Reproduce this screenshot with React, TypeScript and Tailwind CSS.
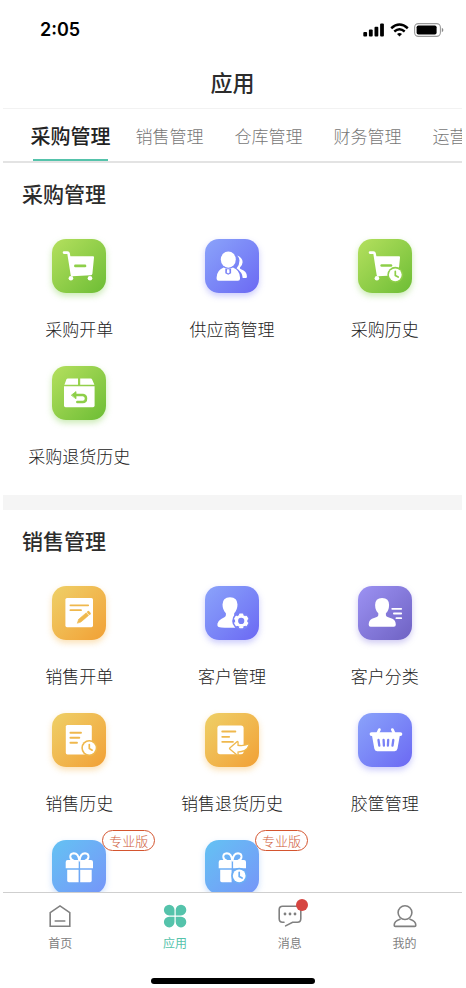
import type { ReactNode } from "react";
import clsx from "clsx";

type Tone = "green" | "blue" | "violet" | "amber" | "sky";

type AppItem = {
  label?: string;
  tone: Tone;
  icon: ReactNode;
  badge?: string;
};

const tones: Record<Tone, string> = {
  green:
    "from-[#b4e05e] to-[#6cbd34] shadow-[0_3px_6px_rgba(125,205,70,0.4)] text-[#8ecf49]",
  blue: "from-[#8ba3fa] to-[#6c68f3] shadow-[0_3px_6px_rgba(110,110,245,0.35)] text-[#7a82f6]",
  violet:
    "from-[#9c92f3] to-[#6f62c3] shadow-[0_3px_6px_rgba(120,105,220,0.35)] text-[#8578da]",
  amber:
    "from-[#eed067] to-[#f1a034] shadow-[0_3px_6px_rgba(245,180,70,0.4)] text-[#efb84d]",
  sky: "from-[#63c2f3] to-[#7595f8] shadow-[0_3px_6px_rgba(110,165,245,0.35)] text-[#6baef5]",
};

/* Glyphs are white, details cut into them use currentColor */
function Glyph({ children }: { children: ReactNode }) {
  return (
    <svg
      viewBox="0 0 54 54"
      className="size-full"
      fill="white"
      strokeLinecap="round"
      strokeLinejoin="round"
      aria-hidden="true"
    >
      {children}
    </svg>
  );
}

function Clock({ cx, cy }: { cx: number; cy: number }) {
  return (
    <g transform={`translate(${cx} ${cy})`}>
      <circle r="8" fill="currentColor" />
      <circle r="6.4" />
      <path d="M0 -3.4V0.6L2.9 2.2" fill="none" stroke="currentColor" strokeWidth="1.7" />
    </g>
  );
}

function CartShape() {
  return (
    <>
      <path d="M12 13.6H15.4Q16.4 13.6 16.6 14.6L20 36" fill="none" stroke="white" strokeWidth="2.6" />
      <path d="M17 17.3H41Q42.2 17.3 42 18.5L40.4 34.8Q40.2 36.1 39 36.2L19.8 37.3Z" />
      <circle cx="18.9" cy="39.3" r="2.3" />
    </>
  );
}

const CartIcon = (
  <Glyph>
    <CartShape />
    <circle cx="38" cy="39.3" r="2.3" />
    <path d="M23.4 26.9H33" stroke="currentColor" strokeWidth="2.7" />
  </Glyph>
);

const CartClockIcon = (
  <Glyph>
    <CartShape />
    <path d="M23.6 26.5H33" stroke="currentColor" strokeWidth="2.5" />
    <Clock cx={37.3} cy={35.8} />
  </Glyph>
);

const SupplierIcon = (
  <Glyph>
    <path d="M32.3 16.4Q37.8 18.8 37.6 23.2Q37.4 26.4 34.9 28.6Q34.4 29.5 36 30.3Q41.9 32.5 41.9 37.2V38Q41.9 39 40.9 39H37.7Q37.5 33.5 31.6 29.3Q34.5 26 34.5 21.6Q34.4 18.6 32.3 16.4Z" />
    <ellipse cx="23.3" cy="20.6" rx="7.5" ry="8.1" />
    <path d="M18.6 28.4Q23.3 31.2 28 28.4Q35 31.2 35 38.6V39.7Q35 41.7 33 41.7H13.6Q11.6 41.7 11.6 39.7V38.6Q11.6 31.2 18.6 28.4Z" />
    <path d="M20.3 29.7H26.1V34.2L23.2 35.8L20.3 34.2Z" fill="currentColor" />
    <path d="M22.1 30.2H24.3L24.6 33.4L23.2 34.5L21.8 33.4Z" />
  </Glyph>
);

const BoxReturnIcon = (
  <Glyph>
    <path d="M15.9 12.4H26V18.8H12.4L14.4 13.4Q14.8 12.4 15.9 12.4Z" />
    <path d="M28.2 12.4H38.6Q39.7 12.4 40.1 13.4L42.4 18.8H28.2Z" />
    <path d="M12 20.2H42.6V39.6Q42.6 41.2 41 41.2H13.6Q12 41.2 12 39.6Z" />
    <path d="M22.5 29H31Q34 29.4 34 32.4Q34 35.9 30.8 35.9H25.3" fill="none" stroke="currentColor" strokeWidth="2.5" />
    <path d="M19.6 29L24 25.6V32.4Z" fill="currentColor" stroke="currentColor" strokeWidth="0.8" />
  </Glyph>
);

const OrderPenIcon = (
  <Glyph>
    <rect x="13.4" y="12" width="27.6" height="29.2" rx="1.6" />
    <path d="M18.4 19.3H36.2M18.4 24.2H29" stroke="currentColor" strokeWidth="1.8" />
    <path d="M25.4 36.9L26.7 33.2L34.3 26.8L36.6 29.4L29 35.9Z" fill="currentColor" stroke="currentColor" strokeWidth="0.6" />
    <path d="M36.3 26.2L37.6 27.6" stroke="currentColor" strokeWidth="2.5" />
  </Glyph>
);

const CustomerGearIcon = (
  <Glyph>
    <path d="M25 11.2Q32.5 11.4 32.5 18.6Q32.4 24.2 29.2 27.2V29.3Q29.4 30.6 31 31.2L37 34V41.7Q19 42 13.6 40.9Q12 40.4 12.4 37.8Q13 34.8 16.2 33L19.4 31.2Q20.9 30.4 20.9 29V27.2Q17.6 24.2 17.5 18.6Q17.5 11.4 25 11.2Z" />
    <circle cx="36.2" cy="34.9" r="9" fill="currentColor" />
    <g transform="translate(36.2 34.9)">
      <circle r="6.2" />
      <path
        d="M-1.2 -6.3H1.2M4.9 -4.2L6.1 -2.1M6.1 2.1L4.9 4.2M1.2 6.3H-1.2M-4.9 4.2L-6.1 2.1M-6.1 -2.1L-4.9 -4.2"
        stroke="white"
        strokeWidth="2"
      />
      <circle r="3.1" fill="currentColor" />
    </g>
  </Glyph>
);

const CustomerListIcon = (
  <Glyph>
    <path d="M24.1 12Q31.1 12.2 31.1 19Q31 24.4 27.9 27.3V29.2Q28 30.4 29.6 31L34.4 32.8Q37.8 34.3 37.8 38.8Q37.8 40.7 35.8 40.7H12.6Q10.7 40.7 10.7 38.8Q10.7 34.3 14 32.8L18.7 31Q20.2 30.4 20.3 29.2V27.3Q17.2 24.4 17.1 19Q17.1 12.2 24.1 12Z" />
    <path d="M34.2 22.8H43.2M35.9 27.5H43.2M38.4 32.2H43.2" stroke="white" strokeWidth="1.8" />
  </Glyph>
);

const OrderClockIcon = (
  <Glyph>
    <rect x="13.8" y="12" width="26" height="29.4" rx="1.6" />
    <path d="M18.4 19.8H29M18.4 24.8H27.3M18.4 29.8H25" stroke="currentColor" strokeWidth="1.9" />
    <Clock cx={37.3} cy={35} />
  </Glyph>
);

const OrderReturnIcon = (
  <Glyph>
    <rect x="12.4" y="12.6" width="26.2" height="28.6" rx="2.6" />
    <path d="M17.2 18.5H30.4M17.2 23.8H24.2M17.2 28.8H28" stroke="currentColor" strokeWidth="1.8" />
    <path
      d="M25.2 35.4L32.4 29.2V32.9Q38.4 34 43.4 31.8Q41.4 38.2 32.4 38.4V41.6Z"
      stroke="currentColor"
      strokeWidth="2.6"
      paintOrder="stroke"
    />
  </Glyph>
);

const BasketIcon = (
  <Glyph>
    <path d="M19.6 20.5L21.4 16.6M36.2 20.5L34.4 16.6" stroke="white" strokeWidth="2.8" />
    <rect x="11.6" y="19.2" width="32.7" height="3.8" rx="1.9" />
    <path d="M13.8 21.5H42L39.5 35.6Q39.1 38.2 36.6 38.2H19.2Q16.7 38.2 16.3 35.6Z" />
    <path d="M20.5 27L21.3 32.6M25.6 27L25.9 32.6M30.2 27L29.9 32.6M35.3 27L34.5 32.6" stroke="currentColor" strokeWidth="2.3" />
  </Glyph>
);

function GiftTop() {
  return (
    <>
      <path
        d="M27.2 20.4Q26.4 13.3 21.8 13.3Q18.2 13.6 18.3 16.9Q18.6 19.8 21.4 20.4M27.6 20.4Q28.4 13.3 33 13.3Q36.6 13.6 36.5 16.9Q36.2 19.8 33.4 20.4"
        fill="none"
        stroke="white"
        strokeWidth="2"
      />
      <path d="M15.6 20H26.7V28.2H13.7V22Q13.7 20 15.6 20ZM28.1 20H39Q41 20 41 22V28.2H28.1Z" />
      <path d="M15.2 29.8H26.6V42.2H16.8Q15.2 42.2 15.2 40.6Z" />
    </>
  );
}

const GiftIcon = (
  <Glyph>
    <GiftTop />
    <path d="M28.2 29.8H39.7V40.6Q39.7 42.2 38.1 42.2H28.2Z" />
  </Glyph>
);

const GiftClockIcon = (
  <Glyph>
    <GiftTop />
    <Clock cx={34.2} cy={35.8} />
  </Glyph>
);

const tabs = ["采购管理", "销售管理", "仓库管理", "财务管理", "运营管理"];

const purchaseItems: AppItem[] = [
  { label: "采购开单", tone: "green", icon: CartIcon },
  { label: "供应商管理", tone: "blue", icon: SupplierIcon },
  { label: "采购历史", tone: "green", icon: CartClockIcon },
  { label: "采购退货历史", tone: "green", icon: BoxReturnIcon },
];

const salesItems: AppItem[] = [
  { label: "销售开单", tone: "amber", icon: OrderPenIcon },
  { label: "客户管理", tone: "blue", icon: CustomerGearIcon },
  { label: "客户分类", tone: "violet", icon: CustomerListIcon },
  { label: "销售历史", tone: "amber", icon: OrderClockIcon },
  { label: "销售退货历史", tone: "amber", icon: OrderReturnIcon },
  { label: "胶筐管理", tone: "blue", icon: BasketIcon },
  { tone: "sky", icon: GiftIcon, badge: "专业版" },
  { tone: "sky", icon: GiftClockIcon, badge: "专业版" },
];

function StatusBar() {
  return (
    <div className="flex h-[54px] shrink-0 items-center justify-between pl-[37px] pr-[18px] pt-[5px]">
      <span className="font-[Inter,sans-serif] text-lg font-semibold text-black">2:05</span>
      <div className="flex items-center gap-[5px]">
        <svg width="22" height="14" viewBox="0 0 22 14" aria-hidden="true">
          <rect x="0.3" y="9" width="3.8" height="4.6" rx="1" />
          <rect x="5.9" y="6.6" width="3.8" height="7" rx="1" />
          <rect x="11.5" y="3.8" width="3.8" height="9.8" rx="1" />
          <rect x="17.1" y="0.6" width="3.8" height="13" rx="1" />
        </svg>
        <svg width="19" height="14" viewBox="0 0 19 14" fill="none" stroke="black" aria-hidden="true">
          <path d="M1.2 5.2Q9.5 -2.2 17.8 5.2" strokeWidth="2.5" />
          <path d="M4.3 8.5Q9.5 4 14.7 8.5" strokeWidth="2.4" />
          <path d="M7 11Q9.5 9.2 12 11L9.5 13.4Z" fill="black" stroke="none" />
        </svg>
        <svg width="30" height="14" viewBox="0 0 30 14" aria-hidden="true">
          <rect x="0.6" y="0.6" width="25.8" height="12.8" rx="3.8" fill="none" stroke="#9a9a9a" strokeWidth="1.1" />
          <rect x="2.6" y="2.5" width="20" height="9" rx="1.8" />
          <path d="M27.8 4.8Q29.4 5.6 29.4 7Q29.4 8.4 27.8 9.2Z" fill="#8a8a8a" />
        </svg>
      </div>
    </div>
  );
}

function AppTile({ item }: { item: AppItem }) {
  return (
    <button type="button" className="flex flex-col items-center">
      <span className={clsx("relative size-[54px] rounded-[14px] bg-linear-to-br", tones[item.tone])}>
        {item.icon}
        {item.badge && (
          <span className="absolute -top-[10px] left-[50px] flex h-[21px] w-[53px] items-center justify-center rounded-full border border-[#d4552f] bg-white text-[13px] font-light whitespace-nowrap text-[#cf5b38]">
            {item.badge}
          </span>
        )}
      </span>
      {item.label && (
        <span className="mt-6 text-[17px] leading-6 font-light whitespace-nowrap text-[#222222]">{item.label}</span>
      )}
    </button>
  );
}

function AppSection({ title, items }: { title: string; items: AppItem[] }) {
  return (
    <section className="pt-4 pb-[27px]">
      <h2 className="mb-8 pl-[19px] text-[21px] leading-7 font-medium text-[#2c2c2c]">{title}</h2>
      <div className="grid grid-cols-3 gap-y-[25px] pr-px">
        {items.map((item, i) => (
          <AppTile key={i} item={item} />
        ))}
      </div>
    </section>
  );
}

function NavItem({
  label,
  active,
  dot,
  children,
}: {
  label: string;
  active?: boolean;
  dot?: boolean;
  children: ReactNode;
}) {
  return (
    <a
      href="#"
      className={clsx(
        "flex flex-1 flex-col items-center gap-[6px] text-xs leading-[18px]",
        active ? "text-[#55c3ab]" : "text-[#808080]"
      )}
    >
      <span className="relative">
        <svg
          width="24"
          height="24"
          viewBox="0 0 24 24"
          fill="none"
          stroke="currentColor"
          strokeWidth="1.6"
          strokeLinecap="round"
          aria-hidden="true"
        >
          {children}
        </svg>
        {dot && <span className="absolute -top-[5px] left-[18px] size-3 rounded-full bg-[#d64541]" />}
      </span>
      {label}
    </a>
  );
}

function BottomNav() {
  return (
    <nav className="flex h-[96px] shrink-0 flex-col justify-between border-t border-[#cfcfcf] bg-white pt-[11px] pb-1">
      <div className="flex">
        <NavItem label="首页">
          <path d="M2.2 8.7L12 1.9L21.8 8.7V22.3H2.2Z" />
          <path d="M7.2 17H16.8" />
        </NavItem>
        <NavItem label="应用" active>
          <g fill="currentColor" stroke="none">
            <path d="M11.5 11.4H6.2A5.3 5.3 0 1 1 11.5 6.1Z" />
            <path d="M12.7 11.4H18A5.3 5.3 0 1 0 12.7 6.1Z" />
            <path d="M11.5 12.8H6.2A5.3 5.3 0 1 0 11.5 18.1Z" />
            <path d="M12.7 12.8H18A5.3 5.3 0 1 1 12.7 18.1Z" />
          </g>
        </NavItem>
        <NavItem label="消息" dot>
          <path d="M6 18.2H4.6Q1.2 18.2 1.2 14.8V5.6Q1.2 2.2 4.6 2.2H19.4Q22.8 2.2 22.8 5.6V14.8Q22.8 18.2 19.4 18.2H14.6L7.6 21.9" />
          <g fill="currentColor" stroke="none">
            <circle cx="7" cy="10" r="1.4" />
            <circle cx="12" cy="10" r="1.4" />
            <circle cx="17" cy="10" r="1.4" />
          </g>
        </NavItem>
        <NavItem label="我的">
          <circle cx="12" cy="8.6" r="6.9" />
          <path d="M7 15.2Q1.2 17 1.2 21.2Q1.2 22.4 2.4 22.4H21.6Q22.8 22.4 22.8 21.2Q22.8 17 17 15.2" />
        </NavItem>
      </div>
      <div className="mx-auto h-[6px] w-[164px] rounded-full bg-black" />
    </nav>
  );
}

export default function App() {
  return (
    <div className="flex h-screen flex-col bg-white pr-1 pl-[3px] font-['Noto_Sans_CJK_SC',sans-serif]">
      <StatusBar />

      <header className="flex h-[54px] shrink-0 items-center justify-center">
        <h1 className="text-[22px] leading-[30px] font-medium text-[#2c2c2c]">应用</h1>
      </header>

      <div className="flex h-[55px] shrink-0 overflow-x-auto overflow-y-hidden border-t border-b-2 border-t-[#f2f2f2] border-b-[#e3e3e3] pl-[18px] [scrollbar-width:none]">
        {tabs.map((tab, i) => (
          <button
            key={tab}
            type="button"
            className={clsx(
              "flex w-[99px] shrink-0 flex-col items-center justify-between pt-3 whitespace-nowrap",
              i === 0 ? "text-[20px] font-medium text-[#222222]" : "text-[17px] font-light text-[#777777]"
            )}
          >
            <span className="leading-[30px]">{tab}</span>
            {i === 0 && <span className="h-[2px] w-[75px] bg-[#55c3ab]" />}
          </button>
        ))}
      </div>

      <main className="flex-1 overflow-y-auto [scrollbar-width:none]">
        <AppSection title="采购管理" items={purchaseItems} />
        <div className="h-[15px] bg-[#f5f5f5]" />
        <AppSection title="销售管理" items={salesItems} />
      </main>

      <BottomNav />
    </div>
  );
}
